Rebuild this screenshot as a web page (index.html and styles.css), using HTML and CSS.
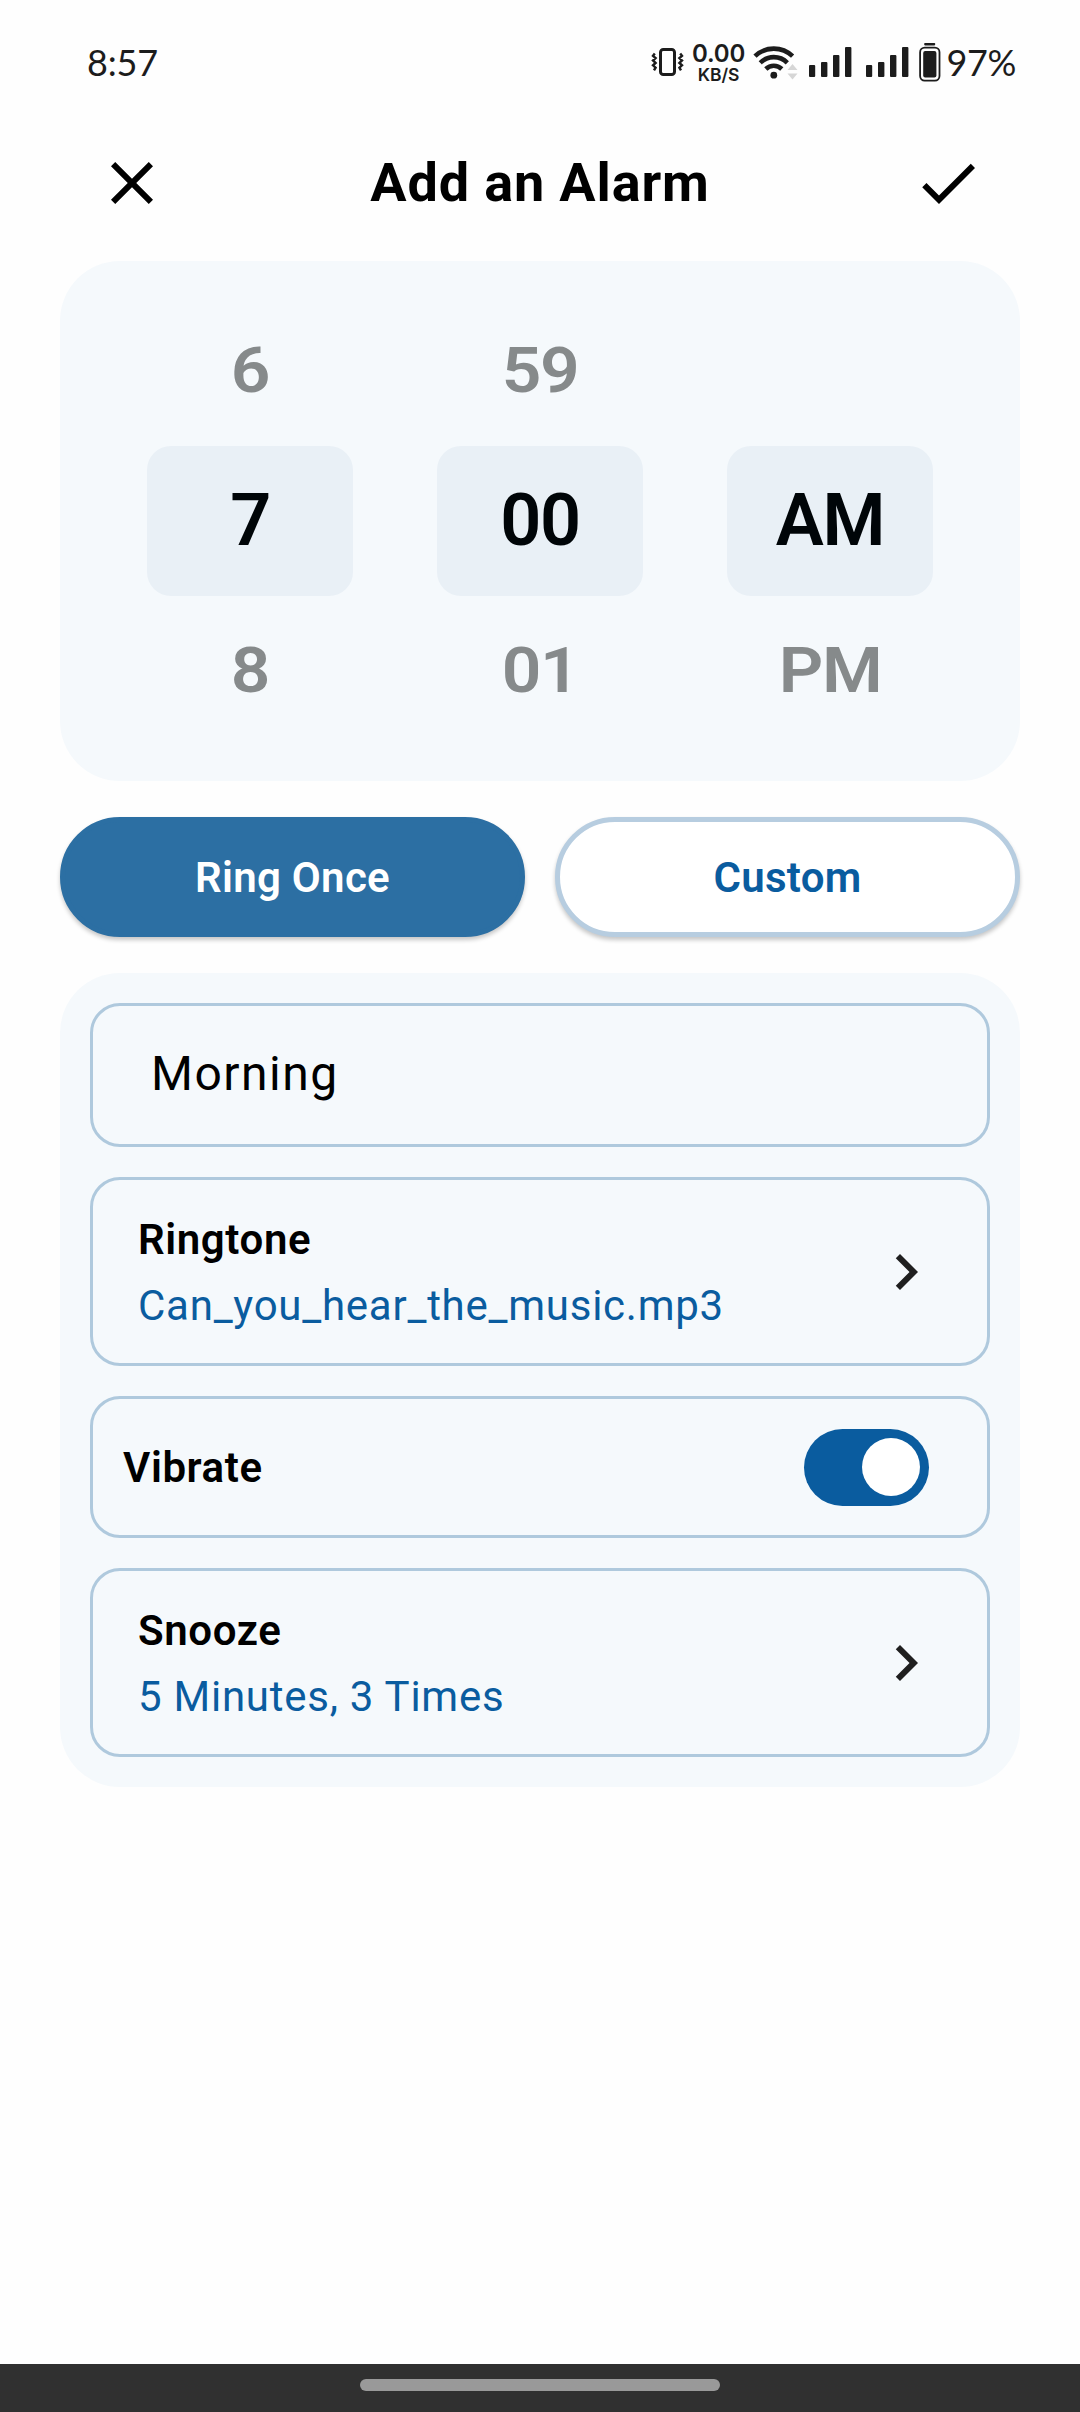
FILE: index.html
```html
<!DOCTYPE html>
<html lang="en">
<head>
<meta charset="utf-8">
<title>Add an Alarm</title>
<link rel="stylesheet" href="styles.css">
</head>
<body>
<div class="screen">
  <div class="status">
    <span class="clock">8:57</span>
    <div class="indicators">
      <svg class="vibrate" width="34" height="34" viewBox="0 0 34 34" fill="none" stroke="#1c1c1c">
        <rect x="9.5" y="4.5" width="14" height="25" rx="2.8" stroke-width="3"/>
        <path d="M3.8 8.5l-1.8 2.3 2.6 2.3-2.6 2.4 2.6 2.4-2.6 2.4 2.6 2.4-1.6 2.6M29.2 8.5l1.8 2.3-2.6 2.3 2.6 2.4-2.6 2.4 2.6 2.4-2.6 2.4 1.6 2.6" stroke-width="2.4"/>
      </svg>
      <div class="speed"><span class="rate">0.00</span><span class="unit">KB/S</span></div>
      <svg class="wifi" width="46" height="36" viewBox="0 0 46 36">
        <g fill="none" stroke="#1c1c1c" stroke-width="4.6">
          <path d="M2 12.2a27 27 0 0 1 37.6 0"/>
          <path d="M7.3 18.8a19 19 0 0 1 27 0"/>
          <path d="M12.8 25a11.5 11.5 0 0 1 16 0"/>
        </g>
        <circle cx="20.8" cy="31.2" r="3.4" fill="#1c1c1c"/>
        <path d="M34.5 26l5-6 5 6zM34.5 29.5l5 6 5-6z" fill="#d6d6d6"/>
      </svg>
      <svg class="signal" width="43" height="32" viewBox="0 0 43 32" fill="#1c1c1c">
        <rect x="0" y="19" width="6.2" height="12" rx="1"/><rect x="12" y="16" width="6.4" height="15" rx="1"/><rect x="24" y="9" width="6.4" height="22" rx="1"/><rect x="36" y="1" width="6.4" height="30" rx="1"/>
      </svg>
      <svg class="signal" width="43" height="32" viewBox="0 0 43 32" fill="#1c1c1c">
        <rect x="0" y="19" width="6.2" height="12" rx="1"/><rect x="12" y="16" width="6.4" height="15" rx="1"/><rect x="24" y="9" width="6.4" height="22" rx="1"/><rect x="36" y="1" width="6.4" height="30" rx="1"/>
      </svg>
      <svg class="battery" width="22" height="40" viewBox="0 0 22 40">
        <rect x="5.2" y="1" width="11" height="2.4" rx=".8" fill="#1c1c1c"/>
        <rect x="1.1" y="5.6" width="19.4" height="33" rx="4.6" fill="none" stroke="#1c1c1c" stroke-width="1.8"/>
        <rect x="4.2" y="9" width="13.2" height="26.4" rx="2" fill="#1c1c1c"/>
      </svg>
      <span class="percent">97%</span>
    </div>
  </div>

  <header class="bar">
    <svg class="icon" viewBox="0 0 24 24"><path d="M19 6.41L17.59 5 12 10.59 6.41 5 5 6.41 10.59 12 5 17.59 6.41 19 12 13.41 17.59 19 19 17.59 13.41 12z"/></svg>
    <h1 class="title">Add an Alarm</h1>
    <svg class="icon" viewBox="0 0 24 24"><path d="M9 16.17L4.83 12l-1.42 1.41L9 19 21 7l-1.41-1.41z"/></svg>
  </header>

  <section class="picker">
    <div class="wheel"><span class="near">6</span><span class="current">7</span><span class="near">8</span></div>
    <div class="wheel"><span class="near">59</span><span class="current">00</span><span class="near">01</span></div>
    <div class="wheel"><span class="near"></span><span class="current">AM</span><span class="near">PM</span></div>
  </section>

  <div class="modes">
    <button class="mode selected">Ring Once</button>
    <button class="mode">Custom</button>
  </div>

  <section class="options">
    <div class="row name">Morning</div>
    <div class="row detail">
      <div class="labels"><span class="label">Ringtone</span><span class="value">Can_you_hear_the_music.mp3</span></div>
      <svg class="icon chevron" viewBox="0 0 24 24"><path d="M10 6L8.59 7.41 13.17 12l-4.58 4.59L10 18l6-6z"/></svg>
    </div>
    <div class="row vibration">
      <span class="label">Vibrate</span>
      <span class="switch"><span class="thumb"></span></span>
    </div>
    <div class="row detail">
      <div class="labels"><span class="label">Snooze</span><span class="value">5 Minutes, 3 Times</span></div>
      <svg class="icon chevron" viewBox="0 0 24 24"><path d="M10 6L8.59 7.41 13.17 12l-4.58 4.59L10 18l6-6z"/></svg>
    </div>
  </section>

  <div class="gesture"><span class="pill"></span></div>
</div>
</body>
</html>
```
FILE: styles.css
```css
* { box-sizing: border-box; }
body { margin: 0; background: #fefefe; font-family: Roboto, sans-serif; color: #000; }
.screen { width: 1080px; height: 2412px; display: flex; flex-direction: column; overflow: hidden; }

.status { height: 123px; padding: 0 64px 0 87px; display: flex; justify-content: space-between; align-items: center; color: #1c1c1c; }
.clock, .percent { font: 400 36px/44px Lato, sans-serif; }
.clock { letter-spacing: -.2px; }
.percent { letter-spacing: -.4px; margin-left: 6px; }
.indicators { display: flex; align-items: center; }
.speed { display: flex; flex-direction: column; align-items: center; width: 54px; margin-left: 7px; padding-top: 3px; font-family: Inter, sans-serif; font-weight: 600; }
.rate { font-size: 24px; line-height: 22px; letter-spacing: -.2px; }
.unit { font-size: 17.5px; line-height: 19px; }
.wifi { margin-left: 7px; }
.signal { margin-left: 10px; }
.signal + .signal { margin-left: 14px; }
.battery { margin-left: 10px; }

.bar { height: 120px; padding: 0 96px; display: flex; justify-content: space-between; align-items: center; }
.icon { width: 72px; height: 72px; flex: none; }
.title { margin: 0; font-size: 54px; font-weight: 700; line-height: 64px; letter-spacing: .85px; }

.picker { margin: 18px 60px 0; height: 520px; padding: 35px 87px; border-radius: 60px; background: #f5f9fc; display: flex; justify-content: space-between; }
.wheel { width: 206px; display: flex; flex-direction: column; font-size: 72px; font-weight: 600; line-height: 150px; text-align: center; letter-spacing: -1.4px; }
.wheel span { height: 150px; }
.current { border-radius: 24px; background: #e9f0f6; color: #000508; }
.near { color: #868a8b; transform: scale(.965, .873); }

.modes { margin: 36px 60px 0; display: grid; grid-template-columns: 1fr 1fr; gap: 30px; }
.mode { height: 120px; padding: 2px 0 0; border: 5px solid #b7cde0; border-radius: 60px; background: #fff; color: #0a5c9f; font: 600 42px/50px Roboto, sans-serif; letter-spacing: .3px; box-shadow: 0 3px 4px rgba(0, 0, 0, .22); }
.mode.selected { border-color: #2c6fa3; background: #2c6fa3; color: #fff; }

.options { margin: 36px 60px 0; height: 814px; padding: 30px; border-radius: 60px; background: #f5f9fc; display: flex; flex-direction: column; gap: 30px; }
.row { border: 3px solid #afc9dd; border-radius: 30px; display: flex; align-items: center; justify-content: space-between; }
.name { height: 144px; padding: 0 57px 4px 58px; font-size: 48px; letter-spacing: 1.5px; }
.detail { height: 189px; padding: 0 45px; }
.vibration { height: 142px; padding: 0 58px 0 30px; }
.labels { display: flex; flex-direction: column; padding-top: 2px; }
.label, .value { font-size: 42px; line-height: 66px; letter-spacing: .75px; }
.label { font-weight: 600; letter-spacing: .6px; }
.vibration .label { padding-top: 2px; }
.value { color: #0a5c9f; }
.chevron { fill: #1f1f1f; }
.switch { width: 125px; height: 77px; padding: 9px; border-radius: 39px; background: #0a5c9f; display: flex; justify-content: flex-end; align-items: center; }
.thumb { width: 58px; height: 58px; border-radius: 50%; background: #fff; }

.gesture { margin-top: auto; height: 48px; padding-top: 15px; background: #303030; display: flex; justify-content: center; }
.pill { width: 360px; height: 12px; border-radius: 6px; background: #999; }
```
